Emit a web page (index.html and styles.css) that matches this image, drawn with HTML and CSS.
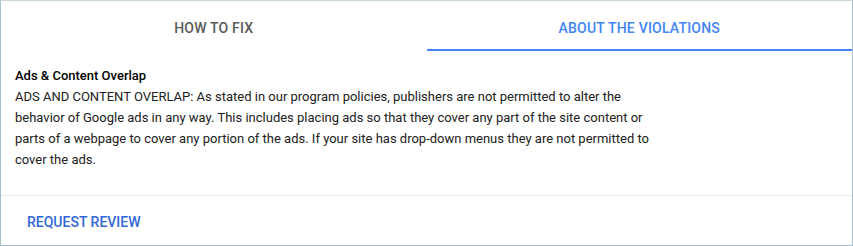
FILE: index.html
```html
<!DOCTYPE html>
<html lang="en">
<head>
    <meta charset="UTF-8">
    <meta name="viewport" content="width=device-width, initial-scale=1.0">
    <title>Violation details</title>
    <link rel="stylesheet" href="styles.css">
</head>
<body>
    <div class="panel">
        <div class="tabs">
            <div class="tab">HOW TO FIX</div>
            <div class="tab active">ABOUT THE VIOLATIONS</div>
        </div>
        <div class="content">
            <h2>Ads &amp; Content Overlap</h2>
            <p>ADS AND CONTENT OVERLAP: As stated in our program policies, publishers are not permitted to alter the behavior of Google ads in any way. This includes placing ads so that they cover any part of the site content or parts of a webpage to cover any portion of the ads. If your site has drop-down menus they are not permitted to cover the ads.</p>
        </div>
        <div class="actions">
            <button class="link-btn">REQUEST REVIEW</button>
        </div>
    </div>
</body>
</html>
```

FILE: styles.css
```css
body {
    font-family: Roboto, "Liberation Sans", Arial, sans-serif;
    margin: 0;
    padding: 0;
    background: #fff;
}
.panel {
    width: 853px;
    height: 246px;
    box-sizing: border-box;
    border: 1px solid #a8c0cc;
    border-top-color: #c9d8df;
    background: #fff;
}
.tabs {
    display: flex;
}
.tab {
    flex: 1;
    text-align: center;
    font-size: 14px;
    font-weight: 500;
    line-height: 20px;
    letter-spacing: 0.2px;
    color: #5a5a5a;
    padding: 17px 0 11px;
    border-bottom: 2px solid transparent;
}
.tab.active {
    color: #4285f4;
    border-bottom-color: #4285f4;
}
.content {
    padding: 14px 14px 25px;
    color: #212121;
    font-size: 13px;
    line-height: 21px;
    border-bottom: 1px solid #ebebeb;
}
.content h2 {
    margin: 0;
    font-size: 13px;
    font-weight: 500;
    color: #000;
}
.content p {
    margin: 0;
    max-width: 645px;
}
.actions {
    padding: 16px 14px 0;
}
.link-btn {
    background: none;
    border: none;
    padding: 0 12px;
    font-family: inherit;
    font-size: 14px;
    font-weight: 500;
    line-height: 21px;
    color: #3367d6;
    cursor: pointer;
}
```
